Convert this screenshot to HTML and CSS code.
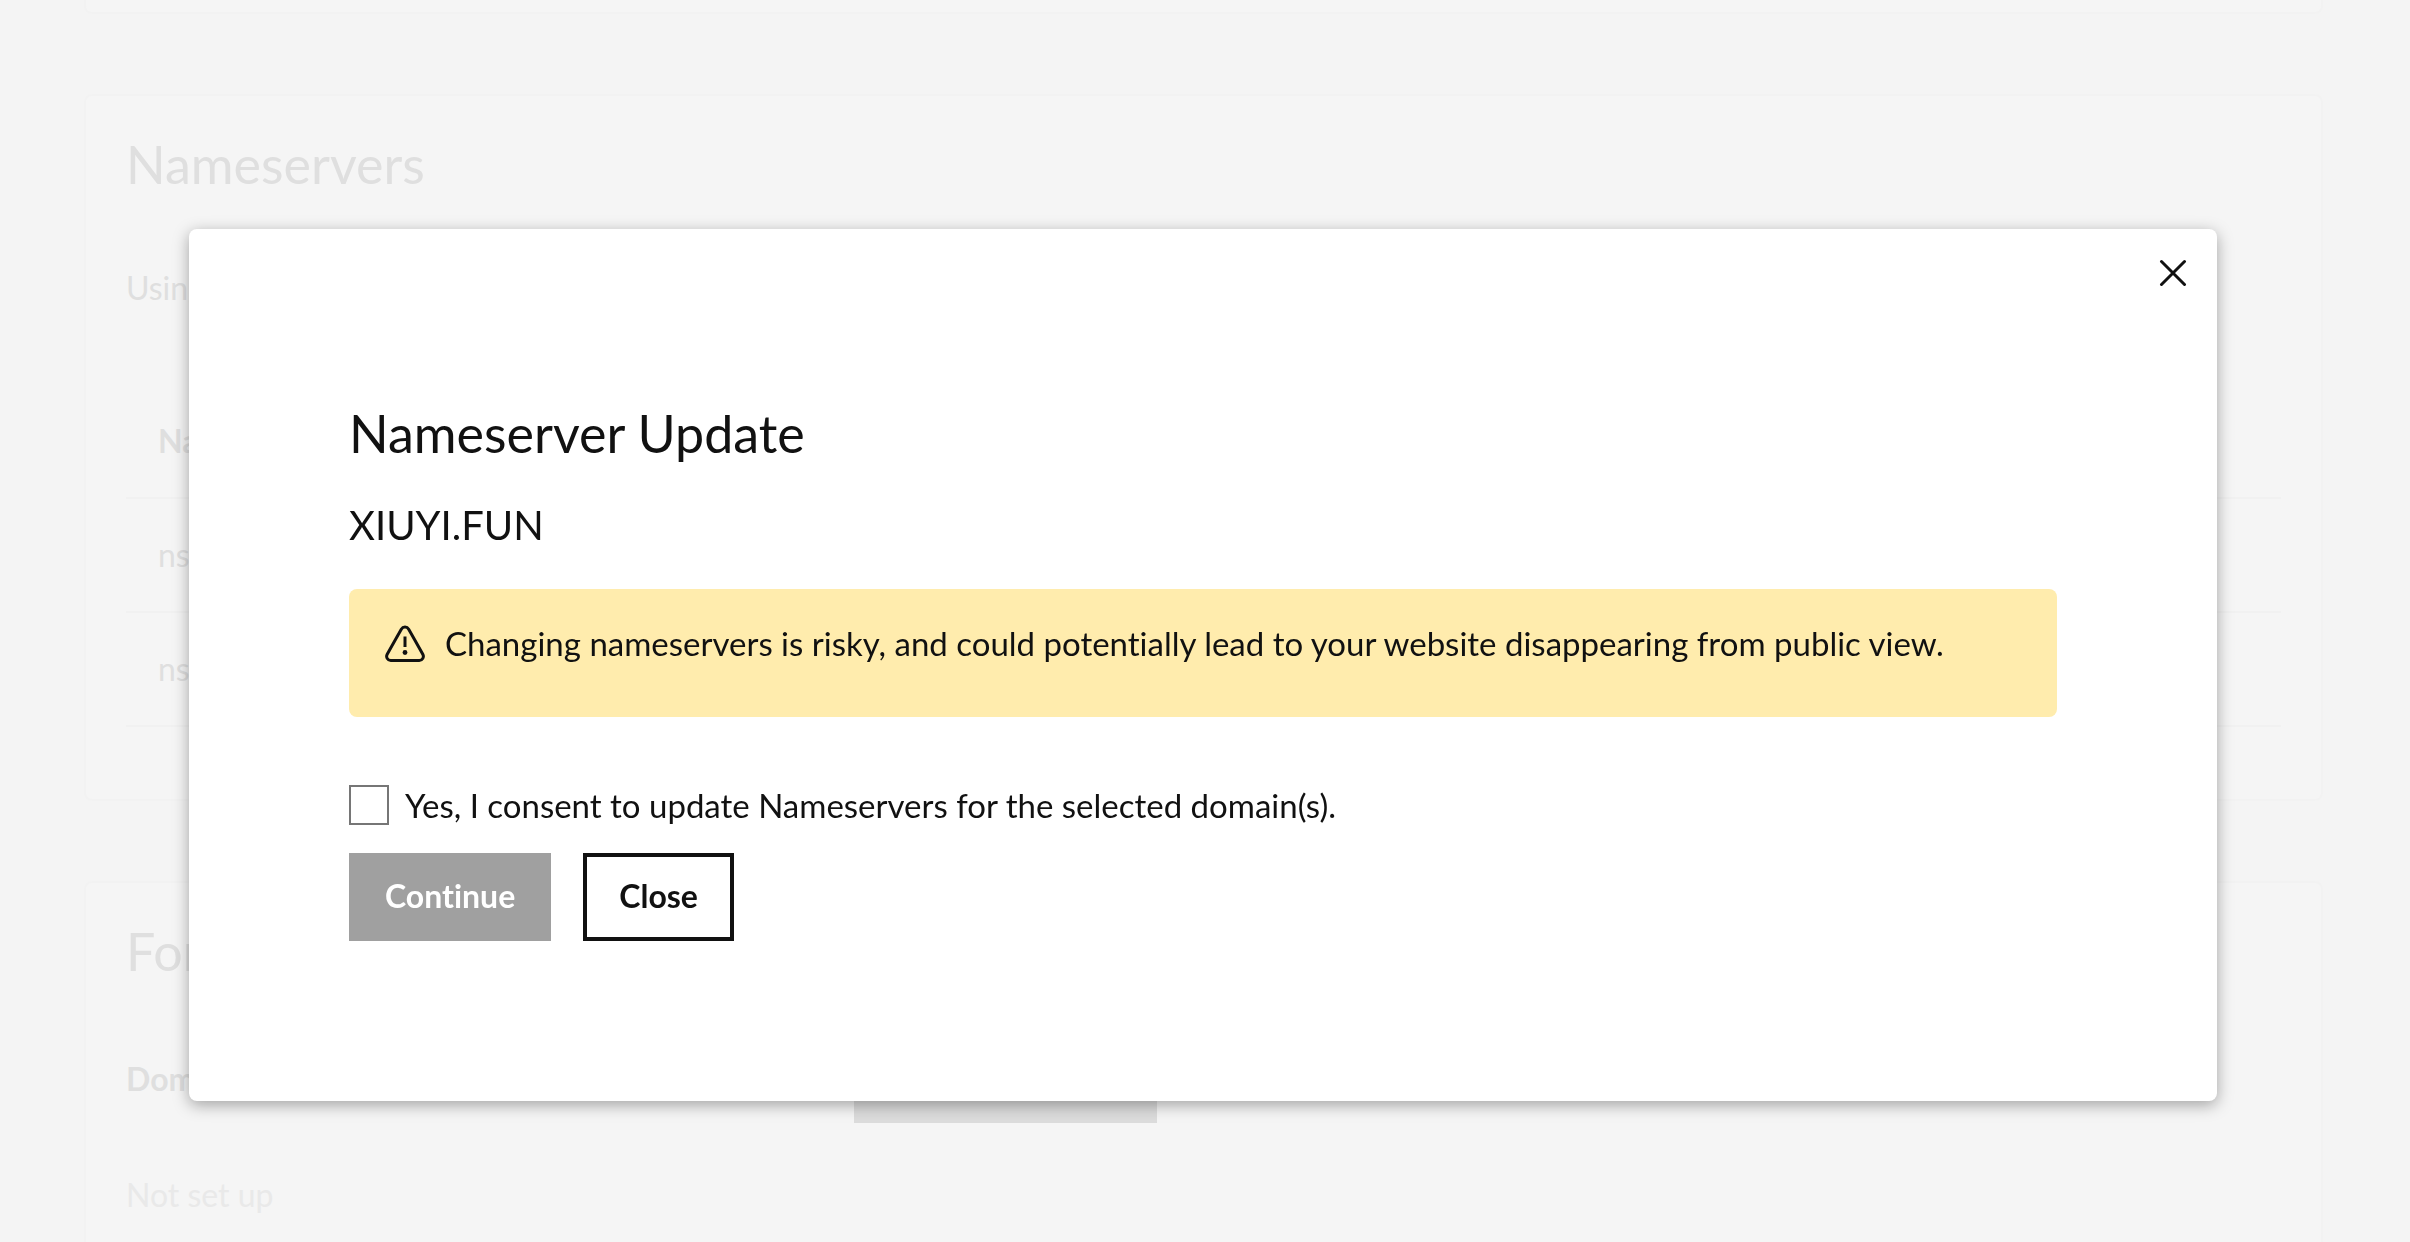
FILE: index.html
```html
<!DOCTYPE html>
<html lang="en">
<head>
  <meta charset="utf-8">
  <meta name="viewport" content="width=device-width, initial-scale=1">
  <title>Nameserver Update</title>
  <link rel="stylesheet" href="styles.css">
</head>
<body>
  <main class="page" inert>
    <section class="card card-cut"></section>

    <section class="card">
      <h2 class="card-title">Nameservers</h2>
      <p class="card-text">Using</p>
      <table class="records">
        <thead>
          <tr><th scope="col">Name</th></tr>
        </thead>
        <tbody>
          <tr><td>ns1</td></tr>
          <tr><td>ns2</td></tr>
        </tbody>
      </table>
    </section>

    <section class="card">
      <h2 class="card-title">Forwarding</h2>
      <div class="forward-row">
        <strong>Domain</strong>
        <button class="forward-button" type="button" aria-label="Add forwarding"></button>
      </div>
      <p class="card-muted">Not set up</p>
    </section>
  </main>

  <div class="overlay">
    <div class="modal" role="dialog" aria-modal="true" aria-labelledby="modal-title">
      <button class="modal-x" type="button" aria-label="Close dialog">
        <svg width="28" height="28" viewBox="0 0 28 28" fill="none" stroke="currentColor" stroke-width="3" stroke-linecap="round" aria-hidden="true">
          <path d="M2.500 2.500 25.500 25.500M25.500 2.500 2.500 25.500"/>
        </svg>
      </button>
      <h1 class="modal-title" id="modal-title">Nameserver Update</h1>
      <p class="modal-domain">XIUYI.FUN</p>
      <div class="alert" role="alert">
        <svg class="alert-icon" width="40" height="40" viewBox="0 0 40 40" fill="none" stroke="currentColor" stroke-width="3" stroke-linejoin="round" stroke-linecap="round" aria-hidden="true">
          <path d="M16.300 4.200 2.200 29.200C.700 32 2.400 35.400 5.700 35.400H34.300C37.600 35.400 39.300 32 37.800 29.200L23.700 4.200C22 1.400 18 1.400 16.300 4.200Z"/>
          <path d="M20 11.500V22" stroke-linecap="butt"/>
          <circle cx="20" cy="27.500" r="2.400" fill="currentColor" stroke="none"/>
        </svg>
        <p class="alert-text">Changing nameservers is risky, and could potentially lead to your website disappearing from public view.</p>
      </div>
      <label class="consent">
        <input class="consent-box" type="checkbox">
        <span>Yes, I consent to update Nameservers for the selected domain(s).</span>
      </label>
      <div class="actions">
        <button class="button button-primary" type="button" disabled>Continue</button>
        <button class="button button-outline" type="button">Close</button>
      </div>
    </div>
  </div>
</body>
</html>
```

FILE: styles.css
```css
* {
  box-sizing: border-box;
}

body,
h1,
h2,
p {
  margin: 0;
}

body {
  background: #f4f4f4;
  color: #111;
  font-family: Lato, "Noto Sans", sans-serif;
  font-size: 33px;
  font-variant-ligatures: none;
  line-height: 48px;
}

h1,
h2 {
  font-size: 52px;
  font-weight: 400;
  line-height: 64px;
}

/* Page behind the dialog, faded back */
.page {
  display: flex;
  flex-direction: column;
  gap: 80px;
  height: 100vh;
  padding: 0 87px 0 84px;
  overflow: hidden;
  color: #dfdfdf;
  font-size: 32px;
}

.card {
  flex: none;
  padding: 36px 40px 72px;
  border: 2px solid #f2f2f2;
  border-radius: 8px;
  background: #f5f5f5;
}

.card-cut {
  padding: 0 0 12px;
  border-top: 0;
  border-radius: 0 0 8px 8px;
}

.card-title {
  margin-bottom: 52px;
}

.card-text {
  padding: 16px 0 72px;
}

.card-muted {
  margin-top: 48px;
  color: #e9e9e9;
}

.records {
  width: 100%;
  border-collapse: collapse;
  text-align: left;
}

.records th,
.records td {
  height: 114px;
  padding: 0 32px;
  border-bottom: 2px solid #f1f1f1;
}

.forward-row {
  display: grid;
  grid-template-columns: 728px 303px;
  align-items: center;
}

.forward-button {
  height: 88px;
  border: 0;
  background: #dcdcdc;
}

/* Dialog */
.overlay {
  position: fixed;
  inset: 0;
  padding: 229px 193px 0 189px;
}

.modal {
  position: relative;
  padding: 172px 160px 160px;
  border-radius: 8px;
  background: #fff;
  box-shadow: 0 4px 16px rgba(0, 0, 0, 0.34);
}

.modal-x {
  position: absolute;
  top: 18px;
  right: 18px;
  display: grid;
  place-items: center;
  width: 52px;
  height: 52px;
  padding: 0;
  border: 0;
  background: none;
  color: #111;
}

.modal-title {
  margin-bottom: 36px;
}

.modal-domain {
  margin-bottom: 40px;
  font-size: 40px;
}

.alert {
  display: flex;
  gap: 20px;
  min-height: 128px;
  margin-bottom: 64px;
  padding: 32px 36px;
  border-radius: 8px;
  background: #ffecad;
}

.alert-icon {
  flex: none;
  margin-top: 4px;
}

.alert-text {
  line-height: 44px;
}

.consent {
  display: flex;
  align-items: center;
  gap: 16px;
  margin-bottom: 24px;
}

.consent-box {
  appearance: none;
  width: 40px;
  height: 40px;
  margin: 0;
  border: 2px solid #767676;
  background: #fff;
}

.actions {
  display: flex;
  gap: 32px;
}

.button {
  height: 88px;
  padding: 0 32px 4px;
  border: 4px solid #111;
  border-radius: 0;
  font-family: inherit;
  font-size: 32px;
  font-variant-ligatures: none;
  font-weight: 700;
}

.button-primary {
  border-color: #a0a0a0;
  background: #a0a0a0;
  color: #fff;
}

.button-outline {
  background: #fff;
  color: #111;
}
```
